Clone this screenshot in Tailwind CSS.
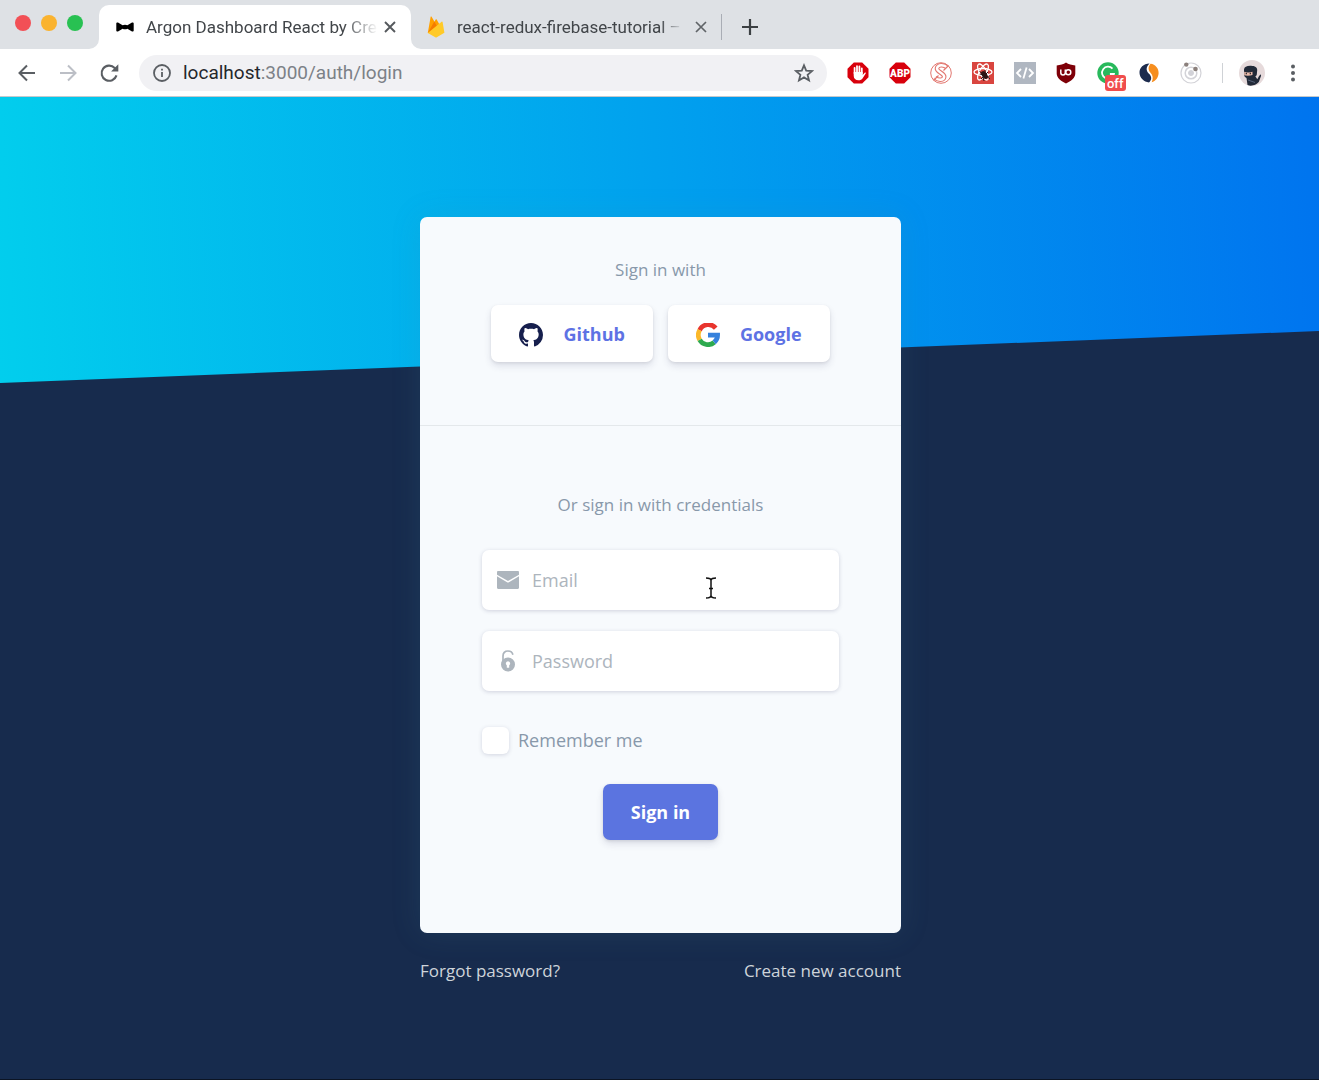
<!DOCTYPE html>
<html lang="en">
<head>
    <meta charset="UTF-8">
    <meta name="viewport" content="width=device-width, initial-scale=1.0">
    <title>Argon Dashboard React by Creative Tim</title>
    <script src="https://cdn.jsdelivr.net/npm/@tailwindcss/browser@4"></script>
</head>
<body class="min-h-screen flex flex-col bg-[#172b4d] font-['Open_Sans',sans-serif]">
    <!-- Browser window -->
    <header class="bg-white border-b border-[#c5c9cc]">
        <div class="flex items-end h-[49px] pt-[5px] bg-[#dee1e5] font-['Roboto',sans-serif] text-[17px] leading-6 text-[#414549]">
            <div class="flex gap-[10px] self-start pt-[10px] pl-[15px] w-[99px] shrink-0">
                <span class="size-4 rounded-full bg-[#f25056]"></span>
                <span class="size-4 rounded-full bg-[#fab32f]"></span>
                <span class="size-4 rounded-full bg-[#28c152]"></span>
            </div>
            <div class="relative flex items-center h-full w-[312px] pl-[17px] bg-white rounded-t-[10px]">
                <svg class="absolute bottom-0 -left-[10px] size-[10px]" viewBox="0 0 10 10" fill="#fff"><path d="M10 0v10H0A10 10 0 0 0 10 0z"/></svg>
                <svg class="absolute bottom-0 -right-[10px] size-[10px]" viewBox="0 0 10 10" fill="#fff"><path d="M0 0v10h10A10 10 0 0 1 0 0z"/></svg>
                <svg class="w-[18px] h-[10px] shrink-0" viewBox="0 0 18 10" fill="#000"><path d="M.3 1.500C.3.500 1.200.2 2 .5l4.600 2.700c1.400-.7 3.400-.7 4.800 0L16 .5c.8-.3 1.700 0 1.700 1v7c0 1-.9 1.300-1.700 1l-4.600-2.700c-1.400.7-3.400.7-4.800 0L2 9.500c-.8.3-1.700 0-1.700-1z"/></svg>
                <span class="ml-3 w-[232px] whitespace-nowrap [mask-image:linear-gradient(to_right,#000_85%,transparent)]">Argon Dashboard React by Cre</span>
                <button class="ml-[3px] p-[3px]" aria-label="Close tab">
                    <svg class="size-[12px]" viewBox="0 0 12 12" stroke="#55595d" stroke-width="1.900"><path d="M1 1l10 10M11 1L1 11"/></svg>
                </button>
            </div>
            <div class="flex items-center h-full pl-[16px]">
                <svg class="w-[18px] h-[22px] shrink-0" viewBox="0 0 18 22">
                    <path d="M.8 17L3.600.9c.1-.5.8-.6 1-.2L7.500 5.800 8.700 3.600c.2-.4.8-.4 1 0L17 17z" fill="#ffa000"/>
                    <path d="M10.300 10.500L7.300 5.500.8 17z" fill="#f57c00"/>
                    <path d="M17.400 16.800L15.600 6c-.1-.5-.7-.7-1-.3L.8 17l7.500 4.300c.5.300 1 .3 1.500 0z" fill="#ffca28"/>
                </svg>
                <span class="ml-3 w-[226px] whitespace-nowrap [mask-image:linear-gradient(to_right,#000_90%,transparent)]">react-redux-firebase-tutorial –</span>
                <button class="ml-[9px] p-[3px]" aria-label="Close tab">
                    <svg class="size-[12px]" viewBox="0 0 12 12" stroke="#606468" stroke-width="1.700"><path d="M1 1l10 10M11 1L1 11"/></svg>
                </button>
                <span class="ml-[11px] w-px h-[26px] bg-[#a9adb5]"></span>
                <button class="ml-5" aria-label="New tab">
                    <svg class="size-4" viewBox="0 0 16 16" stroke="#3c4043" stroke-width="2.200"><path d="M8 0v16M0 8h16"/></svg>
                </button>
            </div>
        </div>

        <div class="flex items-center h-[47px] pl-[17px] pr-[23px]">
            <div class="flex gap-[21px] text-[#5a5e63]">
                <button aria-label="Back"><svg class="size-5" viewBox="0 0 20 20" fill="none" stroke="currentColor" stroke-width="2"><path d="M18 10H3M10 2.500L2.500 10l7.500 7.500"/></svg></button>
                <button aria-label="Forward" class="text-[#bcbfc6]"><svg class="size-5" viewBox="0 0 20 20" fill="none" stroke="currentColor" stroke-width="2"><path d="M2 10h15M10 2.500l7.500 7.500-7.500 7.500"/></svg></button>
                <button aria-label="Reload"><svg class="size-5" viewBox="0 0 20 20"><path d="M17.500 12.400a7.600 7.600 0 1 1-1.800-7.500l2 2" fill="none" stroke="currentColor" stroke-width="2.100"/><path d="M19.300 1.300v7.200h-7.200z" fill="currentColor"/></svg></button>
            </div>
            <div class="flex flex-1 items-center h-9 ml-[20px] pl-[14px] pr-[13px] rounded-full bg-[#f1f1f4]">
                <svg class="size-[18px] shrink-0" viewBox="0 0 18 18" fill="none" stroke="#5a5e63" stroke-width="1.800"><circle cx="9" cy="9" r="8"/><path d="M9 8v5M9 4.800v1.800"/></svg>
                <p class="flex-1 ml-3 font-['Roboto',sans-serif] text-[19px] leading-6 text-[#7c8187]"><span class="text-[#24272b]">localhost</span>:3000/auth/login</p>
                <button aria-label="Bookmark"><svg class="size-5" viewBox="0 0 20 20" fill="none" stroke="#5a5e63" stroke-width="1.800"><path d="M10 2.300l2.200 5.300 5.800.5-4.400 3.700 1.400 5.600-5-3-5 3 1.400-5.600L2 8.100l5.800-.5z"/></svg></button>
            </div>

            <!-- Extensions -->
            <div class="flex items-center justify-between ml-[20px] w-[355px]">
                <svg class="size-[22px]" viewBox="0 0 22 22"><path d="M6.800.5h8.400l6.300 6.300v8.400l-6.300 6.300H6.800L.5 15.200V6.800z" fill="#d8000c"/><path d="M7.600 11.500V5.800M10 10.500V4.200M12.400 10.500V4.500M14.800 11.500V6.300" stroke="#fff" stroke-width="1.800" stroke-linecap="round"/><path d="M6.700 10h9v3l2-2.300c.8-.4 1.300.2 1 .8l-3.200 5c-.8 1.200-2 1.800-4 1.800-3 0-4.800-1.600-4.800-4.500z" fill="#fff"/></svg>
                <svg class="size-[22px]" viewBox="0 0 22 22"><path d="M6.800.5h8.400l6.300 6.300v8.400l-6.300 6.300H6.800L.5 15.200V6.800z" fill="#d8000c"/><text x="11" y="14.700" text-anchor="middle" fill="#fff" font-family="Roboto, sans-serif" font-weight="900" font-size="10">ABP</text></svg>
                <svg class="size-[22px]" viewBox="0 0 22 22" fill="none" stroke="#e27770"><circle cx="11" cy="11" r="10.300" stroke-width="1"/><path d="M17 5.500C14 2.300 7.800 2.500 7 6.300c-.6 3.700 7.500 4.500 7.200 8.500-.4 3.700-6.200 3.900-9.200.7" stroke-width="4.600"/><path d="M17 5.500C14 2.300 7.800 2.500 7 6.300c-.6 3.700 7.500 4.500 7.200 8.500-.4 3.700-6.200 3.900-9.200.7" stroke="#fff" stroke-width="2.400"/><path d="M3.500 18.500l5-5M13.500 8.500l5-5" stroke-width="1.200"/></svg>
                <svg class="size-[22px]" viewBox="0 0 22 22" fill="none"><path d="M0 0h22v22H0z" fill="#d9453f"/><g stroke="#fff" stroke-width="1.300"><ellipse cx="11" cy="10" rx="9" ry="3.500"/><ellipse cx="11" cy="10" rx="9" ry="3.500" transform="rotate(60 11 10)"/><ellipse cx="11" cy="10" rx="9" ry="3.500" transform="rotate(120 11 10)"/></g><ellipse cx="12.500" cy="13" rx="2.500" ry="4.300" transform="rotate(-35 12.500 13)" fill="#2b1513"/><path d="M8 12l9 3M9 17l7-7M13 8v3M12 19l-1-4M18 17l-4-3M7.500 9.500l3 2" stroke="#2b1513"/></svg>
                <svg class="size-[22px]" viewBox="0 0 22 22" fill="none" stroke="#fff" stroke-width="1.800"><path d="M0 0h22v22H0z" fill="#b0b7c1" stroke="none"/><path d="M7 7l-4 4 4 4M15 7l4 4-4 4M12.600 5.500l-3.200 11"/></svg>
                <svg class="size-[22px]" viewBox="0 0 22 22"><path d="M11 .5c2.500 1.700 5.700 2.700 9.300 2.900v8.100c0 4.500-4.300 7.500-9.300 10-5-2.500-9.300-5.500-9.300-10V3.400C5.300 3.200 8.500 2.200 11 .5z" fill="#7e0008"/><path d="M5.800 7.500v3.200c0 1.400.9 2.200 2.200 2.200s2.300-.8 2.300-2.200V7.500" fill="none" stroke="#fff" stroke-width="1.500"/><circle cx="13.300" cy="10.200" r="2.500" fill="none" stroke="#fff" stroke-width="1.500"/></svg>
                <span class="relative">
                    <svg class="size-[22px]" viewBox="0 0 22 22" fill="none"><circle cx="11" cy="11" r="10.700" fill="#28b95c"/><path d="M15.500 6.700a6 6 0 1 0 1.400 5.300h-4" stroke="#fff" stroke-width="1.800"/></svg>
                    <span class="absolute left-2 top-[13px] w-[21px] h-4 rounded-[3px] bg-[#f04d4d] text-white text-center text-[13px] leading-[17px] font-medium font-['Roboto',sans-serif]">off</span>
                </span>
                <svg class="size-[22px]" viewBox="0 0 22 22"><path d="M11.500 1.600C5.500 1.600 1.300 6 1.500 11c.3 5 4.300 8.800 9.500 9.400 3-2.600 3-6-.3-8.900C7.600 8.700 8.200 4.500 11.500 1.600z" fill="#1c2b4d"/><path d="M12.500 1.800c5 .5 8.300 4.700 8.100 9.500-.2 4.400-3 7.800-6.900 9 1.800-3.600 1.200-7-1.200-9.500-2.400-2.600-2.700-5.800 0-9z" fill="#f68e1f"/></svg>
                <svg class="size-[22px]" viewBox="0 0 22 22" fill="none" stroke="#d3d3d8"><circle cx="11" cy="11" r="10" stroke-width="1.200"/><circle cx="11" cy="11" r="5.800" stroke-width="1.500"/><circle cx="11" cy="11" r="2.500" fill="#d2d2d8"/><circle cx="6.300" cy="2.600" r="2.200" fill="#8b807c" stroke="none"/><circle cx="15.500" cy="7" r="2.300" fill="#8b807c" stroke="none"/></svg>
            </div>
            <span class="ml-[20px] w-px h-5 bg-[#cfd2d6]"></span>
            <button class="ml-4" aria-label="Profile">
                <svg class="size-[26px]" viewBox="0 0 26 26"><circle cx="13" cy="13" r="13" fill="#e6dadb"/><path d="M5 9.500C5.200 6.800 8 5.600 12 5.800s6.200 1.500 6.200 4.200l-.4 4.500c-.2 1-.8 1.500-1.500 1.800l2 3 1.800-3.300 1.600-1.800.4 1.600-2.300 6.200C17 25 12.500 26.600 8.500 25l-1-7C5.800 17 5 16 5 14z" fill="#222a38"/><path d="M5.200 11.800c3 .9 5.800.7 8.300-.1v3.300c-2.500.8-5.500.9-8.300.3z" fill="#e9b9aa"/><path d="M7.300 12.800v1.500M11.300 12.800v1.500" stroke="#222" stroke-width="1.200"/><path d="M9 20l7 2.500" stroke="#56627a"/></svg>
            </button>
            <button class="ml-[25px]" aria-label="Menu">
                <svg class="w-[6px] h-[18px]" viewBox="0 0 6 18" fill="#5a5e63"><circle cx="3" cy="2.500" r="2"/><circle cx="3" cy="9" r="2"/><circle cx="3" cy="15.500" r="2"/></svg>
            </button>
        </div>
    </header>

    <!-- Login page -->
    <main class="relative flex-1 pl-[18px] pr-4 pb-16 border-b border-[#0b1424]">
        <div class="absolute inset-x-0 top-0 h-[286px] bg-linear-[87deg,#02ceed,#0074ef]">
            <svg class="absolute bottom-0 w-full h-[52px]" viewBox="0 0 2560 100" preserveAspectRatio="none"><polygon points="2560 0 2560 100 0 100" fill="#172b4d"/></svg>
        </div>

        <div class="relative w-full max-w-[481px] mx-auto pt-[120px]">
            <div class="rounded-[7px] bg-[#f7fafd] shadow-[0_0_30px_rgba(70,140,160,0.15)]">
                <div class="pt-[41px] pb-[63px] border-b border-[#e4e8eb]">
                    <p class="text-center text-[17px] leading-6 text-[#8898aa]">Sign in with</p>
                    <div class="flex justify-center gap-[15px] mt-[23px] text-lg font-bold text-[#5e72e4]">
                        <button class="flex items-center gap-[20px] h-[57px] px-[28px] rounded-[7px] bg-white shadow-[0_4px_7px_rgba(50,50,93,0.13),0_1px_3px_rgba(0,0,0,0.08)]">
                            <svg class="size-6 mt-[3px]" viewBox="0 0 16 16" fill="#161f4d"><path d="M8 0C3.580 0 0 3.580 0 8c0 3.540 2.290 6.530 5.470 7.590.4.070.55-.17.55-.38 0-.19-.01-.82-.01-1.490-2.010.37-2.530-.49-2.690-.94-.09-.23-.48-.94-.82-1.130-.28-.15-.68-.52-.01-.53.63-.01 1.080.58 1.230.82.72 1.210 1.870.87 2.330.66.070-.52.28-.87.51-1.070-1.780-.2-3.640-.89-3.640-3.950 0-.87.31-1.590.82-2.150-.08-.2-.36-1.020.08-2.120 0 0 .67-.21 2.200.82.64-.18 1.320-.27 2-.27.68 0 1.360.09 2 .27 1.530-1.040 2.200-.82 2.200-.82.44 1.100.16 1.920.08 2.120.51.56.82 1.270.82 2.150 0 3.070-1.870 3.750-3.650 3.950.29.25.54.73.54 1.480 0 1.070-.01 1.930-.01 2.200 0 .21.15.46.55.38A8.013 8.013 0 0 0 16 8c0-4.420-3.580-8-8-8z"/></svg>
                            Github
                        </button>
                        <button class="flex items-center gap-[20px] h-[57px] px-[28px] rounded-[7px] bg-white shadow-[0_4px_7px_rgba(50,50,93,0.13),0_1px_3px_rgba(0,0,0,0.08)]">
                            <svg class="size-6 mt-[3px]" viewBox="0 0 48 48" fill="none" stroke-width="9.500"><path d="M39.500 10.200A19.300 19.300 0 0 0 7.300 14.300" stroke="#e8352e"/><path d="M7.300 14.300a19.300 19.300 0 0 0 0 19.400" stroke="#fbb829"/><path d="M7.300 33.700a19.300 19.300 0 0 0 29.100 5.100" stroke="#2eaa4f"/><path d="M36.400 38.800A19.300 19.300 0 0 0 43.200 24H24" stroke="#3581dc"/></svg>
                            Google
                        </button>
                    </div>
                </div>

                <form class="px-[62px] pt-[67px] pb-[93px]">
                    <p class="text-center text-[17px] leading-6 text-[#8898aa]">Or sign in with credentials</p>
                    <label class="relative flex items-center h-[60px] mt-[33px] pl-[15px] rounded-[7px] bg-white shadow-[0_1px_4px_rgba(50,50,93,0.2)]">
                        <svg class="w-[22px] h-[18px] mb-[1px] shrink-0" viewBox="0 0 22 18" fill="#adb5bd"><path d="M1.200 0h19.600C21.500 0 22 .5 22 1.200v2.500L11 10 0 3.700V1.200C0 .5.5 0 1.200 0z"/><path d="M0 5.300l10.500 6.200h1L22 5.300v11.500c0 .7-.5 1.200-1.200 1.200H1.200C.5 18 0 17.500 0 16.800z"/></svg>
                        <input type="email" placeholder="Email" aria-label="Email" class="flex-1 min-w-0 ml-[13px] h-full text-lg text-[#8898aa] placeholder:text-[#adb5bd] outline-none">
                        <svg class="absolute left-[223px] top-[27px] w-[12px] h-[22px]" viewBox="0 0 12 22" fill="none" stroke="#111" stroke-width="1.500"><path d="M1 1c3 0 5 .6 5 2.500C6 1.600 8 1 11 1M1 21c3 0 5-.6 5-2.500 0 1.900 2 2.500 5 2.500M6 3.500v15M4 11.500h4"/></svg>
                    </label>
                    <label class="flex items-center h-[60px] mt-[21px] pl-[15px] rounded-[7px] bg-white shadow-[0_1px_4px_rgba(50,50,93,0.2)]">
                        <svg class="w-[22px] h-[22px] mb-[1px] shrink-0" viewBox="0 0 22 22"><path d="M6 11V6c0-3 2-5 5-5 2.500 0 4.400 1.500 4.900 3.800" fill="none" stroke="#adb5bd" stroke-width="1.700"/><path fill-rule="evenodd" d="M11 7.500a7 7 0 1 1 0 14 7 7 0 0 1 0-14zm0 3.700a2.200 2.200 0 0 0-1.200 4v2.600h2.400v-2.600a2.200 2.200 0 0 0-1.200-4z" fill="#adb5bd"/></svg>
                        <input type="password" placeholder="Password" aria-label="Password" class="flex-1 min-w-0 ml-[13px] h-full text-lg text-[#8898aa] placeholder:text-[#adb5bd] outline-none">
                    </label>
                    <div class="flex items-center gap-[9px] mt-9">
                        <input type="checkbox" id="remember" class="appearance-none size-[27px] rounded-[6px] bg-white shadow-[0_1px_4px_rgba(50,50,93,0.18)] checked:bg-[#5e72e4]">
                        <label for="remember" class="text-lg leading-[27px] text-[#8898aa]">Remember me</label>
                    </div>
                    <div class="mt-[30px] text-center">
                        <button type="button" class="h-14 px-[28px] rounded-[7px] bg-[#5b74e0] text-lg font-bold text-white shadow-[0_4px_7px_rgba(50,50,93,0.13),0_1px_3px_rgba(0,0,0,0.1)]">Sign in</button>
                    </div>
                </form>
            </div>
            <div class="flex justify-between mt-[26px] text-[17px] leading-6 text-[#ced4da]">
                <a href="#">Forgot password?</a>
                <a href="#">Create new account</a>
            </div>
        </div>
    </main>
</body>
</html>
